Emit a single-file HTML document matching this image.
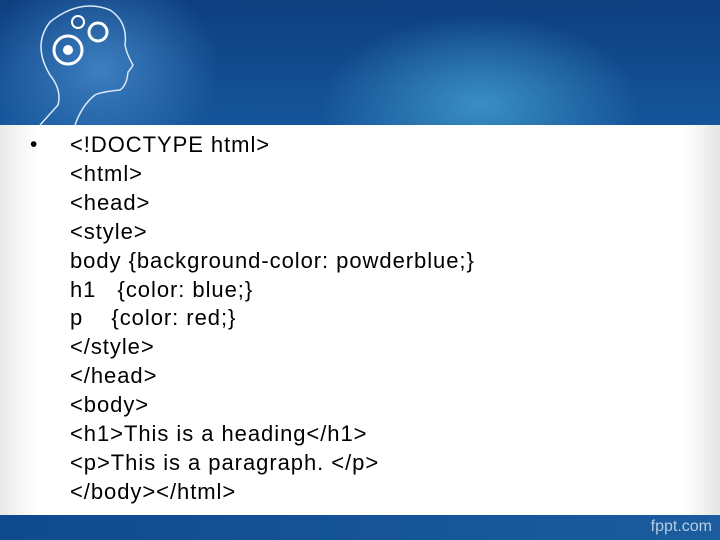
<!DOCTYPE html>
<html><head><style>
body{margin:0;width:720px;height:540px;overflow:hidden;position:relative;font-family:"Liberation Sans",sans-serif;background:#fff}
.top{position:absolute;left:0;top:0;width:720px;height:125px;background:radial-gradient(ellipse 160px 90px at 480px 105px,#3a8fc4 0%,rgba(40,120,180,0) 100%),radial-gradient(ellipse 120px 100px at 100px 70px,#3d7fc0 0%,rgba(30,90,160,0) 100%),linear-gradient(180deg,#0e3f80 0%,#15559a 100%)}
.panel{position:absolute;left:0;top:125px;width:720px;height:390px;background:linear-gradient(90deg,#e9e9e9 0%,#fff 5%,#fff 95%,#e5e5e5 100%)}
.bot{position:absolute;left:0;top:515px;width:720px;height:25px;background:linear-gradient(90deg,#0f4a8e,#1b5d9f)}
.bot span{position:absolute;right:8px;top:3px;font-size:16px;color:#b9cde3}
.txt{position:absolute;left:70px;top:131px;font-size:22px;letter-spacing:0.95px;line-height:28.9px;color:#000;white-space:pre}
.bul{position:absolute;left:30px;top:131px;font-size:21px;line-height:28.9px}
</style></head><body>
<div class="top">
<svg width="240" height="125" style="position:absolute;left:0;top:0" fill="none" stroke="#dbe9f7" stroke-width="1.5">
<path d="M40 125 L58 105 Q62 90 50 75 Q32 45 50 22 Q80 -2 110 10 Q128 22 125 45 Q127 55 133 65 Q130 70 128 72 Q127 85 120 90 Q100 92 95 95 Q82 105 75 125"/>
<g stroke="#fff" stroke-width="3"><circle cx="68" cy="50" r="14"/><circle cx="98" cy="32" r="9"/><circle cx="78" cy="22" r="6" stroke-width="2"/></g>
<g fill="#fff" stroke="none"><circle cx="68" cy="50" r="5"/></g>
</svg>
</div>
<div class="panel"></div>
<div class="bot"><span>fppt.com</span></div>
<div class="bul">•</div>
<div class="txt">&lt;!DOCTYPE html&gt;
&lt;html&gt;
&lt;head&gt;
&lt;style&gt;
body {background-color: powderblue;}
h1   {color: blue;}
p    {color: red;}
&lt;/style&gt;
&lt;/head&gt;
&lt;body&gt;
&lt;h1&gt;This is a heading&lt;/h1&gt;
&lt;p&gt;This is a paragraph. &lt;/p&gt;
&lt;/body&gt;&lt;/html&gt;</div>
</body></html>
